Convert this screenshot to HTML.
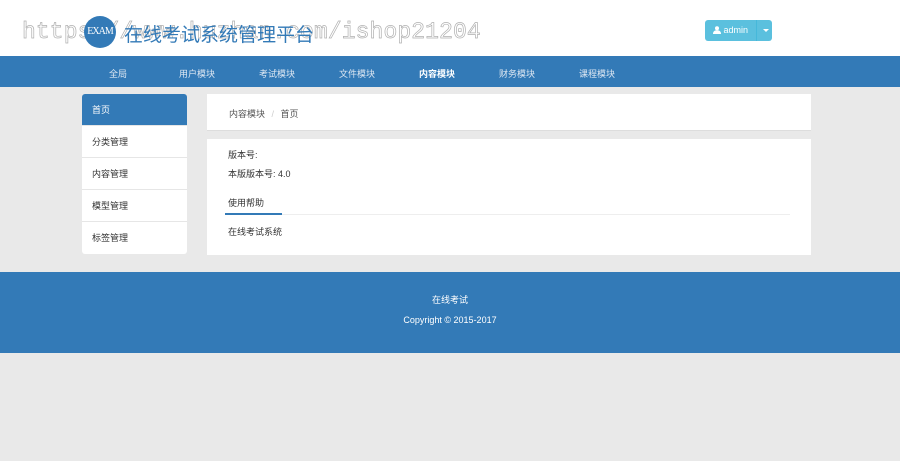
<!DOCTYPE html>
<html><head><meta charset="utf-8"><style>
*{margin:0;padding:0;box-sizing:border-box}
body{width:900px;height:461px;background:#e9e9e9;font-family:"Liberation Sans","Noto Sans CJK SC",sans-serif;font-size:9px;color:#333;position:relative;overflow:hidden}
.hdr{position:absolute;left:0;top:0;width:900px;height:56px;background:#fff}
.logo{position:absolute;left:84px;top:16px;width:32px;height:32px;border-radius:50%;background:#337ab7;color:#fff;font-family:"Liberation Serif",serif;font-size:10px;line-height:32px;text-align:center;letter-spacing:-1px}
.title{position:absolute;left:124px;top:20px;font-size:19px;color:#337ab7}
.wm{position:absolute;left:22px;top:19px;font-family:"Liberation Mono",monospace;font-size:23px;color:#fff;-webkit-text-stroke:0.7px #b0b0b0;white-space:nowrap;letter-spacing:0.1px}
.btn{position:absolute;left:705px;top:20px;width:67px;height:21px;background:#5bc0de;border-radius:3px;color:#fff;font-size:9px}
.btn .a{position:absolute;left:8px;top:5px}
.btn .sep{position:absolute;left:51px;top:0;width:1px;height:21px;background:#46b8da}
.btn .c{position:absolute;left:58px;top:9px;border-left:3px solid transparent;border-right:3px solid transparent;border-top:3px solid #fff}
.nav{position:absolute;left:0;top:56px;width:900px;height:31px;background:#337ab7}
.nav span{position:absolute;top:11px;color:#dde7f2;font-size:9px}
.side{position:absolute;left:82px;top:94px;width:105px;background:#fff;border-radius:3px}
.side div{height:32px;line-height:32px;padding-left:10px;border-bottom:1px solid #e6e6e6;font-size:9px}
.side .on{background:#337ab7;color:#fff;border-radius:3px 3px 0 0}
.bc{position:absolute;left:207px;top:94px;width:604px;height:37px;background:#fff;border-bottom:1px solid #ddd;padding:13px 0 0 22px;color:#555}
.main{position:absolute;left:207px;top:139px;width:604px;height:116px;background:#fff}
.main p{position:absolute;left:21px}
.tab{position:absolute;left:18px;top:59px;width:565px;height:17px;border-bottom:1px solid #eee}
.tab span{position:absolute;left:0;top:0;line-height:11px;height:17px;padding-left:3px;width:57px;border-bottom:2px solid #337ab7}
.ft{position:absolute;left:0;top:272px;width:900px;height:81px;background:#337ab7;color:#fff;text-align:center}
</style></head><body>
<div class="hdr">
<div class="wm">https://www.huzhan.com/ishop21204</div>
<div class="logo">EXAM</div>
<div class="title">在线考试系统管理平台</div>
<div class="btn"><span class="a"><svg width="8" height="8" viewBox="0 0 8 8" style="vertical-align:-1px"><circle cx="4" cy="2.2" r="2" fill="#fff"/><path d="M0 8C0 5 2 4.3 4 4.3S8 5 8 8Z" fill="#fff"/></svg> admin</span><span class="sep"></span><span class="c"></span></div>
</div>
<div class="nav">
<span style="left:109px">全局</span><span style="left:179px">用户模块</span><span style="left:259px">考试模块</span><span style="left:339px">文件模块</span><span style="left:419px;color:#fff;font-weight:bold">内容模块</span><span style="left:499px">财务模块</span><span style="left:579px">课程模块</span>
</div>
<div class="side"><div class="on">首页</div><div>分类管理</div><div>内容管理</div><div>模型管理</div><div style="border:0">标签管理</div></div>
<div class="bc">内容模块 <span style="color:#ccc;margin:0 4px">/</span> 首页</div>
<div class="main">
<p style="top:9px">版本号:</p>
<p style="top:28px">本版版本号: 4.0</p>
<div class="tab"><span>使用帮助</span></div>
<p style="top:86px">在线考试系统</p>
</div>
<div class="ft"><div style="margin-top:21px">在线考试</div><div style="margin-top:9px">Copyright © 2015-2017</div></div>
</body></html>
